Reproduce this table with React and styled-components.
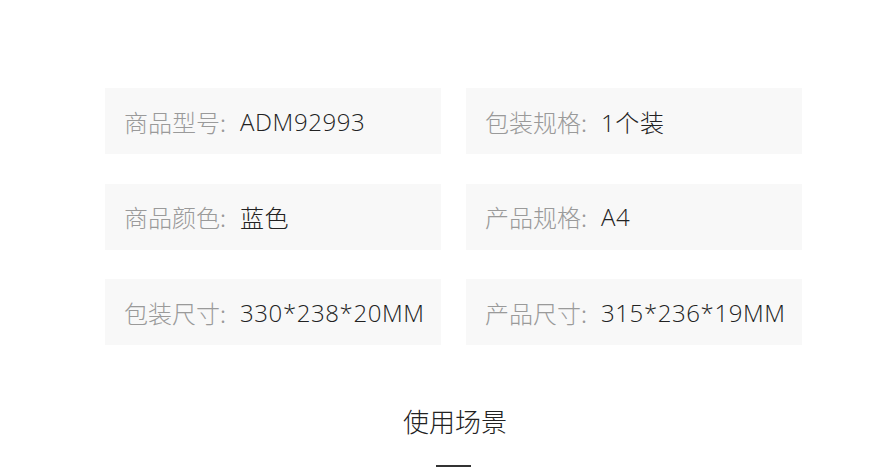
import React from "react";
import styled, { createGlobalStyle } from "styled-components";

const GlobalStyle = createGlobalStyle`
  html, body {
    margin: 0;
    padding: 0;
    background: #fff;
    font-family: "Liberation Sans", "Noto Sans CJK SC", sans-serif;
  }
`;

const Page = styled.div`
  width: 876px;
  height: 469px;
  overflow: hidden;
  padding-top: 88px;
  box-sizing: border-box;
`;

const SpecGrid = styled.div`
  margin-left: 105px;
  width: 697px;
  display: grid;
  grid-template-columns: 336px 336px;
  column-gap: 25px;
  row-gap: 29.5px;
`;

const SpecCard = styled.div`
  height: 66px;
  background: #f8f8f8;
  display: flex;
  align-items: center;
  padding-left: 19px;
  font-size: 24px;
  white-space: nowrap;
`;

const Label = styled.span`
  color: #9a9a9a;
  font-family: "Noto Sans CJK SC", sans-serif;
  font-weight: 300;
  margin-right: 14px;
`;

const Value = styled.span`
  color: #222;
  font-family: "Open Sans", "Noto Sans CJK SC", sans-serif;
  font-weight: 300;
  letter-spacing: 0.6px;
`;

const Section = styled.div`
  margin-top: 58px;
  margin-left: 105px;
  width: 697px;
  display: flex;
  flex-direction: column;
  align-items: center;
`;

const SectionTitle = styled.h2`
  margin: 0;
  padding-left: 3px;
  font-family: "Noto Sans CJK SC", sans-serif;
  font-size: 26px;
  font-weight: 300;
  color: #222;
  line-height: 36px;
`;

const Underline = styled.div`
  margin-top: 26px;
  width: 35px;
  height: 2px;
  background: #333;
`;

const specs = [
  ["商品型号", "ADM92993"],
  ["包装规格", "1个装"],
  ["商品颜色", "蓝色"],
  ["产品规格", "A4"],
  ["包装尺寸", "330*238*20MM"],
  ["产品尺寸", "315*236*19MM"],
];

export default function App() {
  return (
    <Page>
      <GlobalStyle />
      <SpecGrid>
        {specs.map(([label, value]) => (
          <SpecCard key={label}>
            <Label>{label}:</Label>
            <Value>{value}</Value>
          </SpecCard>
        ))}
      </SpecGrid>
      <Section>
        <SectionTitle>使用场景</SectionTitle>
        <Underline />
      </Section>
    </Page>
  );
}
